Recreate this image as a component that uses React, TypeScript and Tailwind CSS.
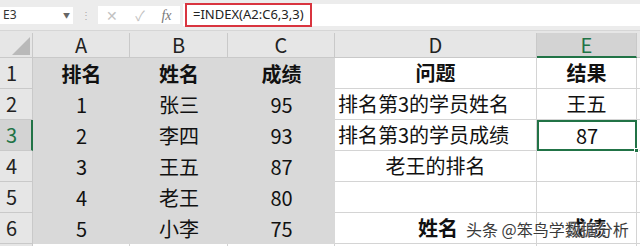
import React from 'react';

const font = "font-['Noto_Sans_CJK_SC','Noto_Sans',sans-serif]";

type Cell = { text?: string; bold?: boolean; align?: 'center' | 'left'; pad?: string };

const rows: { gray: Cell[]; d: Cell; e: Cell }[] = [
  { gray: [{ text: '排名', bold: true }, { text: '姓名', bold: true }, { text: '成绩', bold: true }], d: { text: '问题', bold: true }, e: { text: '结果', bold: true } },
  { gray: [{ text: '1' }, { text: '张三' }, { text: '95' }], d: { text: '排名第3的学员姓名', align: 'left' }, e: { text: '王五' } },
  { gray: [{ text: '2' }, { text: '李四' }, { text: '93' }], d: { text: '排名第3的学员成绩', align: 'left' }, e: { text: '87' } },
  { gray: [{ text: '3' }, { text: '王五' }, { text: '87' }], d: { text: '老王的排名' }, e: {} },
  { gray: [{ text: '4' }, { text: '老王' }, { text: '80' }], d: {}, e: {} },
  { gray: [{ text: '5' }, { text: '小李' }, { text: '75' }], d: { text: '姓名', bold: true, align: 'left', pad: 'pl-[83px]' }, e: { text: '成绩', bold: true } },
];

const CellText: React.FC<{ c: Cell }> = ({ c }) => (
  <span className={`${c.bold ? 'font-bold' : ''} text-[20px] leading-none text-[#111] whitespace-nowrap`}>{c.text}</span>
);

export default function App() {
  return (
    <div className={`w-[640px] h-[246px] overflow-hidden bg-[#e6e6e6] relative ${font}`}>
      {/* formula bar */}
      <div className="h-[31px] flex items-center bg-[#ececec] border-b border-[#d6d6d6]">
        <div className="w-[73px] h-[17px] bg-white flex items-center justify-between pl-[3px] pr-[3px]">
          <span className="text-[12px] text-[#333] font-['Noto_Sans',sans-serif]">E3</span>
          <span className="text-[7px] text-[#666]">▼</span>
        </div>
        <div className="w-[25px] flex justify-center text-[#aaa] text-[10px] leading-none">⋮</div>
        <div className="w-[82px] h-[18px] bg-white flex items-center justify-around text-[#c2c2c2] text-[14px]">
          <span>✕</span>
          <span>✓</span>
          <span className="italic text-[#777] font-['Liberation_Serif',serif] text-[14px]">fx</span>
        </div>
        <div className="flex-1 ml-[3px] h-[22px] bg-white flex items-center">
          <div className="ml-[2px] h-[24px] px-[6px] border-2 border-[#d9343f] flex items-center">
            <span className="text-[13px] text-[#222] font-['Noto_Sans',sans-serif]">=INDEX(A2:C6,3,3)</span>
          </div>
        </div>
      </div>
      <div className="h-[2px] bg-[#e6e6e6]" />
      {/* grid */}
      <div className="grid grid-cols-[33px_97px_98px_107px_202px_100px_1fr] grid-rows-[25px_repeat(6,31px)_10px]">
        {/* header row */}
        <div className="bg-[#e6e6e6] border-r border-b border-[#c9c9c9] flex items-end justify-end p-[2px]">
          <div className="w-0 h-0 border-l-[18px] border-l-transparent border-b-[18px] border-b-[#b9b9b9]" />
        </div>
        {['A', 'B', 'C', 'D'].map((l) => (
          <div key={l} className="bg-[#e6e6e6] border-r border-b border-[#c9c9c9] flex items-center justify-center text-[20px] text-[#222] leading-none">
            {l}
          </div>
        ))}
        <div className="bg-[#d3d3d3] border-r border-[#c9c9c9] border-b-2 border-b-[#217346] flex items-center justify-center text-[20px] text-[#217346] leading-none">
          E
        </div>
        <div className="bg-[#e6e6e6] border-b border-[#c9c9c9]" />

        {rows.map((r, i) => (
          <React.Fragment key={i}>
            <div
              className={`border-b flex items-center pl-[6px] text-[20px] leading-none ${
                i === 2
                  ? 'bg-[#d3d3d3] text-[#217346] border-b-[#c9c9c9] border-r-2 border-r-[#217346]'
                  : 'bg-[#e6e6e6] text-[#222] border-[#c9c9c9] border-r'
              }`}
            >
              {i + 1}
            </div>
            {r.gray.map((c, j) => (
              <div key={j} className="bg-[#d9d9d9] flex items-center justify-center">
                <CellText c={c} />
              </div>
            ))}
            <div
              className={`bg-white border-r border-b border-[#d4d4d4] flex items-center ${
                r.d.align === 'left' ? `justify-start ${r.d.pad ?? 'pl-[3px]'}` : 'justify-center'
              }`}
            >
              <CellText c={r.d} />
            </div>
            <div
              className={`bg-white flex items-center justify-center ${
                i === 2 ? 'border-2 border-[#217346] relative' : 'border-r border-b border-[#d4d4d4]'
              }`}
            >
              <CellText c={r.e} />
              {i === 2 && <div className="absolute right-[-4px] bottom-[-4px] w-[5px] h-[5px] bg-[#217346] border border-white" />}
            </div>
            <div className="bg-white border-b border-[#d4d4d4]" />
          </React.Fragment>
        ))}
        <div className="bg-[#e6e6e6] border-r border-[#c9c9c9]" />
        <div className="bg-white border-r border-[#d4d4d4]" />
        <div className="bg-white border-r border-[#d4d4d4]" />
        <div className="bg-white border-r border-[#d4d4d4]" />
        <div className="bg-white border-r border-[#d4d4d4]" />
        <div className="bg-white border-r border-[#d4d4d4]" />
        <div className="bg-white" />
      </div>
      {/* watermark */}
      <div className="absolute left-[466px] top-[221px] whitespace-nowrap text-[16px] leading-none text-[#3a3a3a] [text-shadow:0_0_2px_#fff,0_0_2px_#fff]">
        头条 @笨鸟学数据分析
      </div>
    </div>
  );
}
